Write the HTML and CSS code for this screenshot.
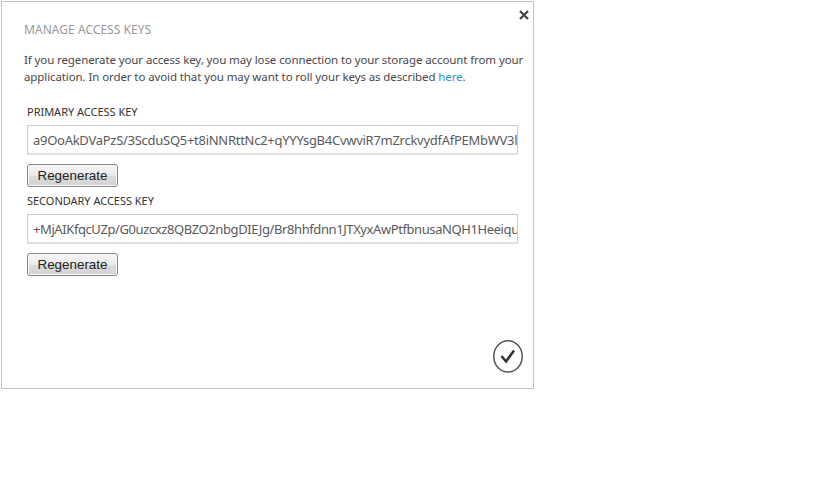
FILE: index.html
```
<!DOCTYPE html>
<html lang="en">
<head>
<meta charset="utf-8">
<title>Manage Access Keys</title>
<link rel="stylesheet" href="styles.css">
</head>
<body>
<main class="dialog">
  <button class="close" aria-label="Close"><svg width="10" height="10" viewBox="0 0 10 10"><path d="M1 1 L9 9 M9 1 L1 9"/></svg></button>
  <h1>MANAGE ACCESS KEYS</h1>
  <p class="intro"><span class="line1">If you regenerate your access key, you may lose connection to your storage account from your</span><br><span class="line2">application. In order to avoid that you may want to roll your keys as described <a>here</a>.</span></p>
  <section class="key">
    <h2>PRIMARY ACCESS KEY</h2>
    <div class="field"><div class="value value1">a9OoAkDVaPzS/3ScduSQ5+t8iNNRttNc2+qYYYsgB4CvwviR7mZrckvydfAfPEMbWV3l</div></div>
    <button class="regen">Regenerate</button>
  </section>
  <section class="key">
    <h2>SECONDARY ACCESS KEY</h2>
    <div class="field"><div class="value value2">+MjAIKfqcUZp/G0uzcxz8QBZO2nbgDIEJg/Br8hhfdnn1JTXyxAwPtfbnusaNQH1Heeiqu</div></div>
    <button class="regen">Regenerate</button>
  </section>
  <button class="confirm" aria-label="OK"><svg width="32" height="34" viewBox="0 0 32 34"><ellipse cx="16" cy="17.4" rx="14.2" ry="15.6"/><path d="M9.5 17 L14 22.5 L22 11.5"/></svg></button>
</main>
</body>
</html>
```
FILE: styles.css
```
* { box-sizing: border-box; }
body { margin: 0; padding: 1px; background: #fff; font-family: "Noto Sans", sans-serif; color: #444; }
button { border: 0; padding: 0; background: none; }
svg { display: block; fill: none; }
.dialog { position: relative; width: 533px; height: 388px; padding: 19px 9px 0 22px; border: 1px solid #c2c2c2; }
h1 { margin: 0; height: 30px; font-size: 12px; line-height: 18px; font-weight: 400; color: #999; white-space: nowrap; letter-spacing: 0.04px; }
.intro { margin: 0; height: 52px; font-size: 11.5px; line-height: 17px; white-space: nowrap; color: #484848; }
.line1 { letter-spacing: -0.1px; }
.line2 { letter-spacing: -0.1px; }
.intro a { color: #2a95d5; }
.key { width: 491px; margin-left: 3px; height: 89px; }
h2 { margin: 0; height: 22px; font-size: 11px; line-height: 18px; font-weight: 400; color: #333; white-space: nowrap; letter-spacing: -0.02px; }
.field { height: 30px; padding-left: 5px; border: 1px solid #ccc; border-bottom: 2px solid #e0e0e0; line-height: 29px; font-size: 13px; color: #5a5a5a; }
.value { height: 27px; overflow: hidden; white-space: nowrap; }
.value1 { letter-spacing: -0.275px; }
.value2 { letter-spacing: -0.41px; }
.regen { display: block; width: 91px; height: 23px; margin: 9px 0 0; border: 1px solid #858585; border-radius: 3px; background: linear-gradient(#f5f5f5, #ebebeb 50%, #dcdcdc 51%, #d2d2d2); box-shadow: inset 0 0 0 1px #fafafa; font: 13.4px "Liberation Sans", sans-serif; color: #222; }
.close { position: absolute; top: 8px; right: 4px; }
.close path { stroke: #444; stroke-width: 2.2; }
.confirm { position: absolute; right: 9px; bottom: 15px; }
.confirm ellipse { stroke: #555; stroke-width: 1.5; }
.confirm path { stroke: #333; stroke-width: 2.5; }
```
